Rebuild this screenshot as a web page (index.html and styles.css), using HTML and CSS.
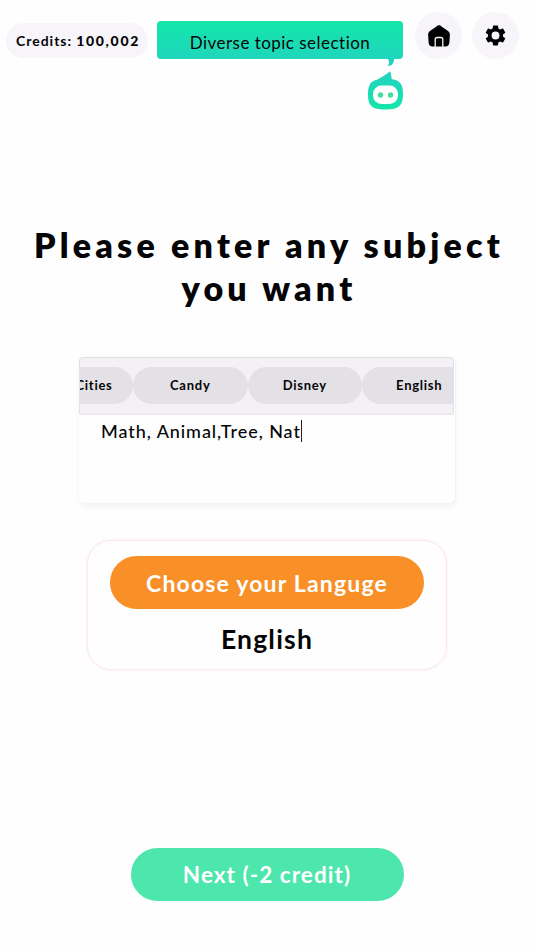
FILE: index.html
```html
<!DOCTYPE html>
<html lang="en">
<head>
<meta charset="utf-8">
<title>Subject selection</title>
<link rel="stylesheet" href="styles.css">
</head>
<body>
<main class="screen">
  <header class="topbar">
    <div class="credits"><span class="credits-label">Credits:</span> <b class="credits-value">100,002</b></div>
    <div class="banner">
      <span class="banner-text">Diverse topic selection</span>
      <svg class="bot" viewBox="0 0 38 54" width="38" height="54" aria-hidden="true">
        <defs><linearGradient id="bot-fill" x1="0" y1="0" x2="0" y2="1"><stop offset="0" stop-color="#22d3c0"/><stop offset="1" stop-color="#15e5aa"/></linearGradient></defs>
        <path fill="#20d2bf" d="M21 0h6c0 4-1.500 7-6.500 6.800C22.500 5 22.500 3 21 0z"/>
        <path fill="url(#bot-fill)" d="M23 12.500c1.300 1.500 1.300 5 1.600 7.500C33 21.500 36 25 36 34.500c0 12-3.500 16-17.500 16S1 46.500 1 35C1 25.500 4 22 10 20.700 14 18.500 19 15.500 23 12.500z"/>
        <rect x="6" y="26.500" width="25" height="18.500" rx="8.500" fill="#fff"/>
        <circle cx="13.500" cy="36" r="2.700" fill="#45dda6"/><circle cx="23.500" cy="36" r="2.700" fill="#45dda6"/>
      </svg>
    </div>
    <nav class="actions">
      <button class="round" aria-label="Home">
        <svg viewBox="0 0 24 24" width="24" height="24"><path d="M12 1.200c1 0 1.700.600 2.500 1.200l6.200 4.400c1.300 1 2.200 2.200 2.200 4l-.5 7.600c-.2 2.500-1.700 4-4 4H5.600c-2.300 0-3.800-1.500-4-4l-.5-7.600c0-1.800.9-3 2.200-4l6.200-4.400c.8-.6 1.500-1.200 2.500-1.200z"/><path d="M8.200 23v-7.500c0-1.200.8-2 2-2h3.600c1.200 0 2 .8 2 2V23" fill="none" stroke="#f7f5f9" stroke-width="1.300"/></svg>
      </button>
      <button class="round" aria-label="Settings">
        <svg viewBox="0 0 24 24" width="25" height="25"><path d="M19.140 12.940c.04-.3.060-.61.060-.94s-.02-.64-.07-.94l2.030-1.580a.49.49 0 0 0 .12-.61l-1.920-3.320a.49.49 0 0 0-.59-.22l-2.390.96a7 7 0 0 0-1.620-.94l-.36-2.540a.48.48 0 0 0-.48-.41h-3.840a.48.48 0 0 0-.47.41l-.36 2.540c-.59.24-1.130.57-1.620.94l-2.390-.96a.48.48 0 0 0-.59.22L2.740 8.870a.48.48 0 0 0 .12.61l2.030 1.580c-.05.3-.09.63-.09.940s.02.64.07.940l-2.030 1.580a.49.49 0 0 0-.12.61l1.920 3.320c.12.220.37.290.59.220l2.390-.96c.5.380 1.030.7 1.620.94l.36 2.540c.05.240.24.410.48.410h3.840c.24 0 .44-.17.470-.41l.36-2.540a7 7 0 0 0 1.620-.94l2.390.96c.22.080.47 0 .59-.22l1.920-3.320a.48.48 0 0 0-.12-.61zM12 15.800a3.800 3.800 0 1 1 0-7.600 3.800 3.800 0 0 1 0 7.600z"/></svg>
      </button>
    </nav>
  </header>

  <h1 class="title">Please enter any subject<br>you want</h1>

  <section class="subject">
    <div class="chips">
      <span class="chip chip-first">Cities</span><span class="chip">Candy</span><span class="chip">Disney</span><span class="chip">English</span>
    </div>
    <div class="entry"><span class="entry-text">Math, Animal,Tree, Nat</span><i class="caret"></i></div>
  </section>

  <section class="language">
    <button class="pill choose">Choose your Languge</button>
    <div class="selected">English</div>
  </section>

  <button class="pill next">Next (-2 credit)</button>
</main>
</body>
</html>
```
FILE: styles.css
```css
* { box-sizing: border-box; }
body { margin: 0; background: #fefefe; color: #050507; font-family: Lato, "Open Sans", sans-serif; }
button { border: 0; padding: 0; font-family: inherit; color: inherit; }
.screen { width: 534px; height: 950px; display: flex; flex-direction: column; align-items: center; overflow: hidden; white-space: nowrap; }

.topbar { width: 534px; height: 59px; padding: 12px 15px 0 6px; display: flex; }
.credits { width: 142px; height: 35px; margin-top: 11px; padding-left: 2px; border-radius: 18px; background: #f7f5f9; display: flex; align-items: center; justify-content: center; gap: 4px; font-size: 14px; line-height: 35px; }
.credits-label { font-weight: 700; letter-spacing: 1px; }
.credits-value { font-weight: 900; letter-spacing: 1.700px; }
.banner { position: relative; width: 246px; height: 38px; margin: 9px 0 0 9px; border-radius: 4px; background: linear-gradient(#13e7aa, #20d5bd); text-align: center; font-size: 17px; line-height: 43px; }
.banner-text { letter-spacing: .47px; }
.bot { position: absolute; top: 38px; right: -2px; }
.actions { display: flex; gap: 10px; margin-left: 12px; }
.round { width: 47px; height: 47px; border-radius: 50%; background: #f7f5f9; display: flex; align-items: center; justify-content: center; }

.title { margin: 164px 0 0; padding-left: 4px; font-size: 34px; line-height: 43px; font-weight: 800; letter-spacing: 4.200px; text-align: center; }

.subject { width: 377px; height: 147px; margin: 48px 0 0; border: 1px solid #f5f2f7; border-left-width: 0; border-top: 0; border-radius: 6px; background: #fefefe; box-shadow: 0 3px 5px #f5f2f7; }
.chips { width: 375px; height: 58px; padding-top: 9px; border: 1px solid #e2e0e5; border-bottom: 2px solid #ebe9ed; border-radius: 4px 4px 2px 2px; background: #f3f1f5; display: flex; justify-content: flex-end; overflow: hidden; }
.chip { flex: 0 0 114.500px; height: 37px; border-radius: 19px; background: #e3e1e5; text-align: center; font-size: 13px; line-height: 37px; font-weight: 700; letter-spacing: .75px; }
.chip-first { flex-basis: 78px; }
.chip:last-child { margin-right: -24px; }
.entry { display: flex; align-items: center; height: 31px; padding-left: 22.500px; font-size: 18px; font-weight: 500; }
.entry-text { letter-spacing: .93px; }
.caret { width: 1px; height: 22px; background: #222; }

.language { width: 360px; height: 130px; margin-top: 36px; padding-top: 15px; border: 1px solid #fce7ed; border-radius: 24px; box-shadow: 0 0 3px #fce8ef; display: flex; flex-direction: column; align-items: center; }
.pill { height: 53px; border-radius: 27px; color: #fff; font-size: 22.500px; font-weight: 700; line-height: 54px; text-align: center; }
.choose { width: 314px; background: #f98f27; font-size: 23px; letter-spacing: 1.180px; }
.selected { margin-top: 10px; font-size: 26.500px; line-height: 40px; font-weight: 700; letter-spacing: 1.200px; }
.next { width: 273px; margin-top: 178px; background: #4de6ad; letter-spacing: 1.050px; }
```
